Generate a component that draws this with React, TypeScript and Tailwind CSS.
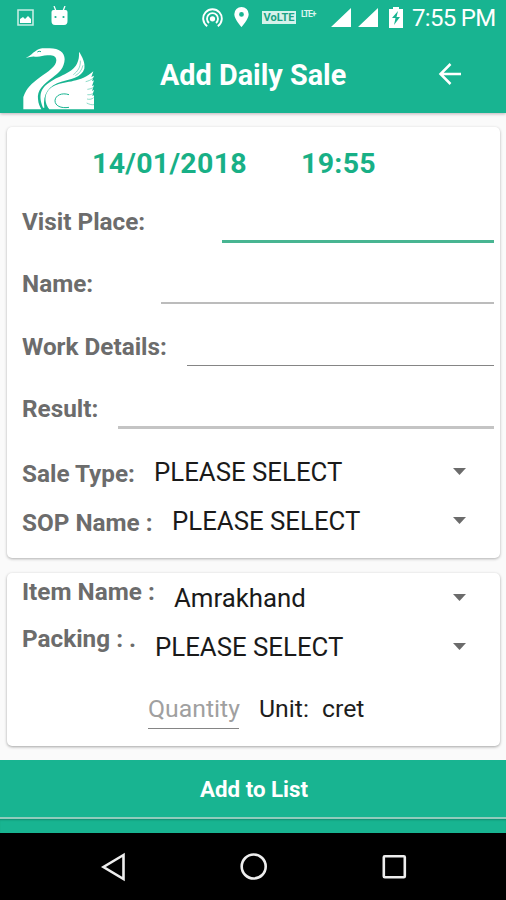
import React from 'react';

interface FieldRowProps {
    label: string;
    lineClass: string;
}

interface SelectRowProps {
    label: string;
    value: string;
    labelClass: string;
}

const SwanLogo = () => (
    <svg width="71" height="63" viewBox="24 21 213 189" fill="#fff" className="shrink-0">
        <path d="M32 53C48 47 51 39 63 32C73 24 85 24 98 25C130 23 149 36 149 58C148 84 132 99 112 113C84 133 66 151 69 177C70 191 74 199 79 208H25V171C35 143 50 131 75 112C100 94 124 80 124 61C124 47 111 45 97 46C82 47 75 52 59 50C49 49 43 53 32 53Z" />
        <path d="M84 203C66 158 82 138 116 119C150 100 196 92 192 35C203 52 211 68 208 86C200 112 168 117 139 125C103 136 82 160 88 203Z" />
        <path d="M103 208C84 184 88 150 121 136C155 122 196 129 235 94L229 111L237 107L231 124L237 121L231 138L237 136L231 153L237 149L232 168L237 166V208Z" />
        <g fill="none" stroke="#18b491" strokeWidth="1.5">
            <path d="M162 164C140 157 121 166 120 182C120 197 137 206 162 202" strokeWidth="3" />
            <path d="M235 114C228 120 220 123 212 125M237 141C230 146 224 147 217 148M237 158C230 164 224 165 217 164M236 173C230 178 223 179 216 177M237 194C230 195 223 193 215 189" />
            <path d="M196 62C197 82 188 94 175 104M204 76C200 92 192 101 181 107" />
        </g>
        <path d="M67 36Q72 32 78 35" fill="none" stroke="#18b491" strokeWidth="3" />
    </svg>
);

const StatusBar = () => (
    <div className="h-9 flex items-start pl-[17px] text-white">
        <svg width="17" height="17" viewBox="0 0 17 17" className="mt-[9px]">
            <path d="M1 1H16V16H1Z" fill="none" stroke="#c5ede3" strokeWidth="1.6" />
            <path d="M3 14V10L6 8L8 10L11 7L14 10V14Z" fill="#fff" />
        </svg>
        <svg width="17" height="20" viewBox="0 0 17 20" className="mt-1.5 ml-[17px]">
            <path d="M3 0L5 5M14 0L12 5" stroke="#fff" strokeWidth="1.3" />
            <path d="M2.5 4H14.5Q16.5 4 16.5 6V15Q16.5 19 13 19H4Q.5 19 .5 15V6Q.5 4 2.5 4Z" fill="#fff" />
            <circle cx="4.5" cy="11" r="1.1" fill="#18b491" />
            <circle cx="12.5" cy="11" r="1.1" fill="#18b491" />
        </svg>
        <svg width="21" height="20" viewBox="0 0 21 20" className="mt-[8px] ml-[134px]" fill="none" stroke="#fff" strokeWidth="1.9">
            <path d="M5.2 18.2A9.3 9.3 0 1 1 15.8 18.2" />
            <path d="M7 14.9A5.5 5.5 0 1 1 14 14.9" />
            <circle cx="10.5" cy="10.8" r="1.7" fill="#fff" />
        </svg>
        <svg width="15" height="20" viewBox="0 0 15 20" className="mt-[7px] ml-[11px]">
            <path d="M7.5 0A7.2 7.2 0 0 0 .3 7.2C.3 12 7.5 20 7.5 20S14.7 12 14.7 7.2A7.2 7.2 0 0 0 7.5 0ZM7.5 5A2.4 2.4 0 1 1 7.5 9.8A2.4 2.4 0 0 1 7.5 5Z" fill="#fff" fillRule="evenodd" />
        </svg>
        <div className="mt-[11px] ml-[13px] w-[34px] h-[13px] bg-[#d5f2eb] text-[#18a283] text-[11px] leading-[13px] font-bold text-center">VoLTE</div>
        <div className="mt-[10px] ml-[5px] w-[15px] text-[8.5px] leading-[9px] font-bold tracking-[-1px] text-[#d9f5ee] whitespace-nowrap">LTE+</div>
        <svg width="47" height="19" viewBox="0 0 47 19" className="mt-[8px] ml-[15px]">
            <path d="M0 19L20 0V19ZM27 19L47 0V19Z" fill="#fff" />
        </svg>
        <svg width="14" height="21" viewBox="0 0 14 21" className="mt-[7px] ml-[11px]">
            <path d="M4 0H10V2H14V21H0V2H4Z" fill="#fff" />
            <path d="M9 4L3 11H6.5L5 18L11 10H7.5Z" fill="#18b491" />
        </svg>
        <span className="ml-[9px] mt-1 text-[24px] leading-[28px] tracking-[-0.7px] whitespace-nowrap">7:55 PM</span>
    </div>
);

const FieldRow = ({ label, lineClass }: FieldRowProps) => (
    <div className="h-[62.3px] flex items-start pl-[15px] pr-1.5">
        <span className="text-[24.3px] leading-[62px] font-bold text-[#6c6c6c] whitespace-nowrap">{label}</span>
        <div className={`ml-auto ${lineClass}`} />
    </div>
);

const SelectRow = ({ label, value, labelClass }: SelectRowProps) => (
    <div className="h-[49px] flex items-start pl-[15px] pr-[34px]">
        <span className={`shrink-0 text-[24.3px] leading-[49px] font-bold text-[#6c6c6c] whitespace-nowrap ${labelClass}`}>{label}</span>
        <span className="text-[25.8px] leading-[49px] text-[#1a1a1a] whitespace-nowrap">{value}</span>
        <svg width="13" height="7" viewBox="0 0 13 7" className="ml-auto mt-[20px]">
            <path d="M0 0H13L6.5 7Z" fill="#6b6b6b" />
        </svg>
    </div>
);

const App = () => {
    return (
        <div className="w-[506px] h-[900px] flex flex-col overflow-hidden bg-[#fafafa] font-['Roboto',sans-serif]">
            <header className="h-[113px] shrink-0 bg-[#18b491] shadow-[0_1px_3px_rgba(80,40,60,0.35)]">
                <StatusBar />
                <div className="h-[77px] flex items-start pl-[23px] pr-[45px] pt-[11px]">
                    <SwanLogo />
                    <h1 className="ml-[66px] mt-[9px] text-[28.8px] leading-[38px] font-bold text-white whitespace-nowrap">Add Daily Sale</h1>
                    <svg width="24" height="24" viewBox="0 0 24 24" className="ml-auto mt-[15px]" fill="none" stroke="#fff" strokeWidth="2.5">
                        <path d="M24 12H4M13.5 2L3.5 12L13.5 22" />
                    </svg>
                </div>
            </header>

            <main className="h-[647px] shrink-0 pl-[7px] pr-1.5 pt-[14px]">
                <section className="h-[431px] bg-white rounded-[5px] shadow-[0_1px_3px_rgba(0,0,0,0.3)]">
                    <div className="h-16 flex pl-[85px] text-[28.5px] leading-[73px] font-bold text-[#18b086] whitespace-nowrap">
                        <span className="w-[209px] tracking-[0.3px]">14/01/2018</span>
                        <span className="tracking-[0.3px]">19:55</span>
                    </div>
                    <FieldRow label="Visit Place:" lineClass="w-[272px] h-[3px] mt-[49px] bg-[#48b592]" />
                    <FieldRow label="Name:" lineClass="w-[333px] h-[2px] mt-[49px] bg-[#bcbcbc]" />
                    <FieldRow label="Work Details:" lineClass="w-[307px] h-[1.5px] mt-[49px] bg-[#858585]" />
                    <FieldRow label="Result:" lineClass="w-[376px] h-[3px] mt-[48px] bg-[#c4c4c4]" />
                    <div className="pt-[8px]">
                        <SelectRow label="Sale Type:" value="PLEASE SELECT" labelClass="w-[132px] pt-px" />
                        <SelectRow label="SOP Name :" value="PLEASE SELECT" labelClass="w-[150px] pt-px" />
                    </div>
                </section>

                <section className="mt-[15px] pt-px h-[173px] bg-white rounded-[5px] shadow-[0_1px_3px_rgba(0,0,0,0.35)]">
                    <SelectRow label="Item Name :" value="Amrakhand" labelClass="w-[152px] -mt-[7px]" />
                    <SelectRow label="Packing : ." value="PLEASE SELECT" labelClass="w-[133px] -mt-[9px]" />
                    <div className="flex items-start pl-[141px] pt-[16px] text-[24.8px] leading-[39px] whitespace-nowrap text-[#1d1d1d]">
                        <div className="w-[91px] pt-px border-b-[1.5px] border-[#858585] text-[#a0a0a0]">Quantity</div>
                        <span className="ml-5 w-[63px] pt-px">Unit:</span>
                        <span className="pt-px">cret</span>
                    </div>
                </section>
            </main>

            <button className="h-[57px] shrink-0 bg-[#18b491] text-white text-[22.3px] font-bold pt-0.5 pl-0.5">Add to List</button>
            <div className="h-4 shrink-0 bg-[#18b491] border-t-2 border-[#91cbbc] shadow-[inset_0_2px_2px_-1px_rgba(0,70,50,0.35)]" />

            <nav className="flex-1 bg-black">
                <svg width="506" height="67" viewBox="0 0 506 67" fill="none" stroke="#eee" strokeWidth="2.6">
                    <path d="M123.5 22L103.5 34L123.5 46Z" />
                    <circle cx="253.7" cy="33.5" r="12" />
                    <rect x="383.8" y="23.3" width="21" height="21" rx="1" />
                </svg>
            </nav>
        </div>
    );
};

export default App;
